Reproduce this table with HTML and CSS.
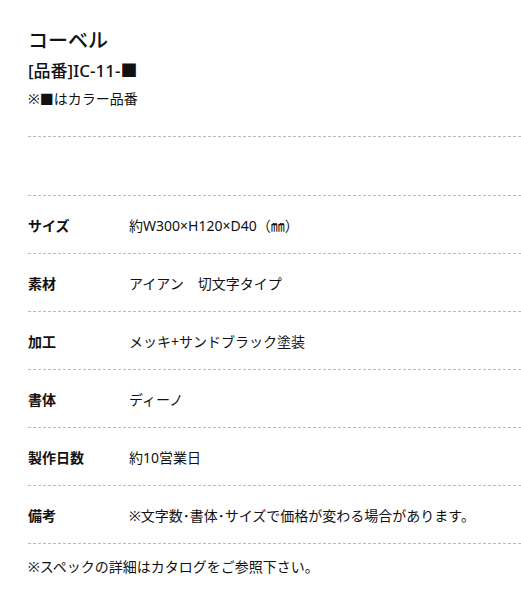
FILE: index.html
```html
<!DOCTYPE html>
<html>
<head>
  <meta charset="utf-8">
  <title>コーベル</title>
  <link rel="stylesheet" href="styles.css">
</head>
<body>
  <div class="item">
    <h1 class="item-name">コーベル</h1>
    <p class="item-code">[品番]IC-11-■</p>
    <p class="item-note">※■はカラー品番</p>

    <div class="spec-blank"></div>

    <dl class="spec">
      <div class="spec-row">
        <dt>サイズ</dt>
        <dd>約W300×H120×D40（㎜）</dd>
      </div>
      <div class="spec-row">
        <dt>素材</dt>
        <dd>アイアン　切文字タイプ</dd>
      </div>
      <div class="spec-row">
        <dt>加工</dt>
        <dd>メッキ+サンドブラック塗装</dd>
      </div>
      <div class="spec-row">
        <dt>書体</dt>
        <dd>ディーノ</dd>
      </div>
      <div class="spec-row">
        <dt>製作日数</dt>
        <dd>約10営業日</dd>
      </div>
      <div class="spec-row">
        <dt>備考</dt>
        <dd>※文字数･書体･サイズで価格が変わる場合があります。</dd>
      </div>
    </dl>

    <p class="spec-foot">※スペックの詳細はカタログをご参照下さい。</p>
  </div>
</body>
</html>
```

FILE: styles.css
```css
* {
  margin: 0;
  padding: 0;
  box-sizing: border-box;
}

body {
  background: #fff;
  color: #111;
  font-family: "Noto Sans", "Noto Sans CJK JP", sans-serif;
  font-size: 14px;
  overflow: hidden;
}

.item {
  padding: 26px 0 0 28px;
}

.item-name {
  font-size: 20px;
  font-weight: 500;
  line-height: 30px;
}

.item-code {
  margin-top: 4px;
  font-size: 17px;
  font-weight: 500;
  line-height: 22px;
}

.item-note {
  margin-top: 6px;
  line-height: 22px;
}

.spec-blank {
  margin-top: 26px;
  height: 59px;
  border-top: 1px dashed #bbb;
}

.spec {
  border-top: 1px dashed #bbb;
}

.spec-row {
  display: flex;
  align-items: center;
  height: 58px;
  border-bottom: 1px dashed #bbb;
}

.spec-row dt {
  width: 101px;
  font-weight: 700;
}

.spec-row dd {
  flex: 1;
}

.spec-foot {
  margin-top: 12px;
  line-height: 22px;
}
```
